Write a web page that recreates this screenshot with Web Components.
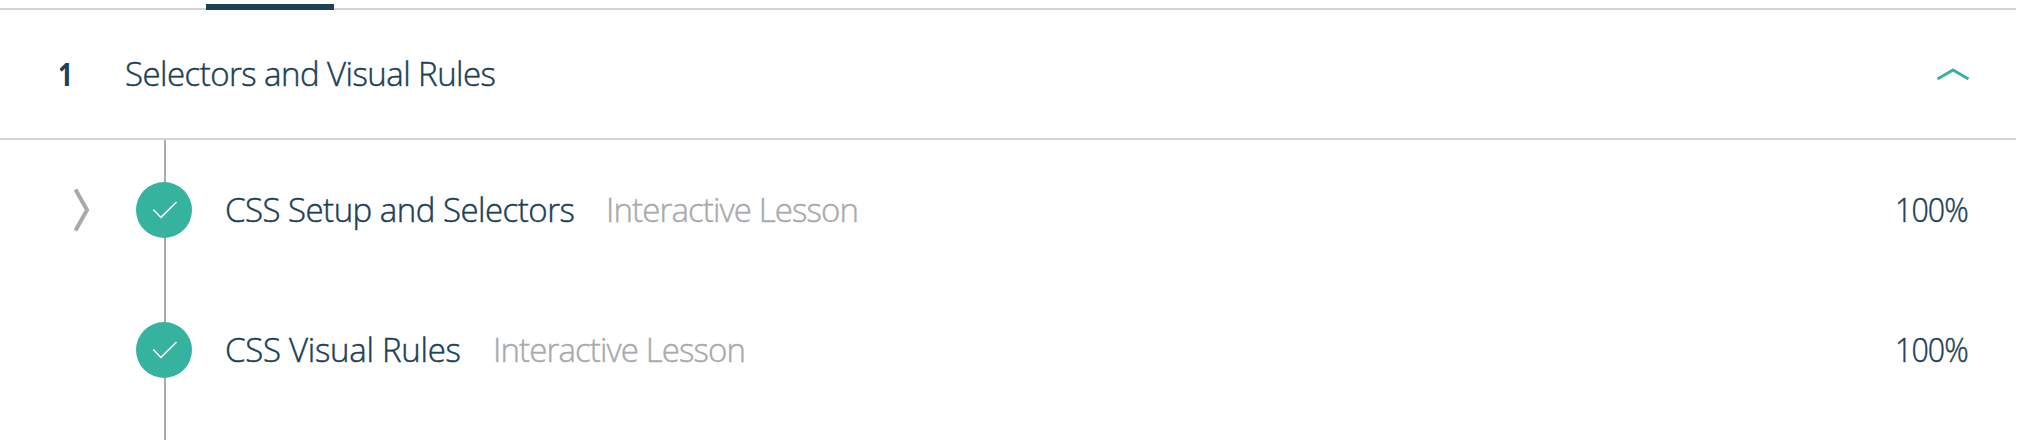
<!DOCTYPE html>
<html lang="en"><head><meta charset="utf-8"><title>Syllabus</title>
<style>
html,body{margin:0;background:#fff}
body{height:440px;overflow:hidden;font:300 33px/44px "Open Sans","Noto Sans",sans-serif;color:#204056;-webkit-text-stroke:.45px currentColor}
</style></head><body>
<syllabus-panel>
<module-header slot="header"><span slot="number">1</span><span slot="title">Selectors and Visual Rules</span></module-header>
<lesson-row expandable style="--title-width:347px;--title-spacing:-.51px"><span slot="title">CSS Setup and Selectors</span><span slot="kind">Interactive Lesson</span><span slot="score">100%</span></lesson-row>
<lesson-row style="--title-width:234px;--title-spacing:-.27px"><span slot="title">CSS Visual Rules</span><span slot="kind">Interactive Lesson</span><span slot="score">100%</span></lesson-row>
</syllabus-panel>
<script>
const define=(name,html)=>customElements.define(name,class extends HTMLElement{
  constructor(){super();this.attachShadow({mode:'open'}).innerHTML=html}
});
define('check-badge',`<style>:host{display:block;width:56px;height:56px;border-radius:50%;background:#36b39f}svg{display:block}</style>
<svg width="56" height="56" fill="none" stroke="#fff" stroke-width="1.5"><path d="M17.3 27.4 25 35.4 40.5 20"/></svg>`);
define('module-header',`<style>
:host{display:flex;align-items:center;height:128px;border-bottom:2px solid #d4d4d5;box-sizing:content-box}
.n{width:67px;padding-left:58px;font-weight:700;font-size:32px;-webkit-text-stroke:0}
.t{flex:1;white-space:nowrap;letter-spacing:-.55px}
.n ::slotted(*){display:inline-block;transform:scaleX(.82);transform-origin:left}
svg{display:block;margin-right:46px}
</style><div class="n"><slot name="number"></slot></div><div class="t"><slot name="title"></slot></div>
<svg width="34" height="16" fill="none" stroke="#36b39f" stroke-width="3"><path d="M1.5 13 17 4 32.5 13"/></svg>`);
define('lesson-row',`<style>
:host{display:flex;align-items:center;height:140px}
.toggle{width:62px;padding-left:74px;height:44px}
svg{display:block}
.toggle svg{visibility:hidden}
:host([expandable]) .toggle svg{visibility:visible}
.t{margin-left:33px;width:var(--title-width);letter-spacing:var(--title-spacing)}
.k{margin-left:34px;color:#a9aaad;letter-spacing:-.88px;flex:1}
.k ::slotted(*){-webkit-text-stroke:.45px #a9aaad}
.s{width:74px;margin-right:47px}
.s ::slotted(*){display:inline-block;letter-spacing:-1px;transform:scaleX(.92);transform-origin:left}
.t,.k,.s{white-space:nowrap}
</style><div class="toggle"><svg width="18" height="44" fill="none" stroke="#a9aaad" stroke-width="4"><path d="M1.5 1.5 13 22 1.5 42.5"/></svg></div>
<check-badge></check-badge><div class="t"><slot name="title"></slot></div><div class="k"><slot name="kind"></slot></div><div class="s"><slot name="score"></slot></div>`);
define('syllabus-panel',`<style>
:host{display:block;width:2016px}
.tabs{height:10px;box-sizing:border-box;display:flex;align-items:flex-end;background:linear-gradient(#d4d4d5,#d4d4d5) 0 8px/100% 2px no-repeat}
.active{width:128px;height:6px;margin-left:206px;background:#204056}
.list{height:300px;background:linear-gradient(#a9aaad,#a9aaad) 164px 0/2px 100% no-repeat}
</style><div class="tabs"><div class="active"></div></div><slot name="header"></slot><div class="list"><slot></slot></div>`);
</script></body></html>
